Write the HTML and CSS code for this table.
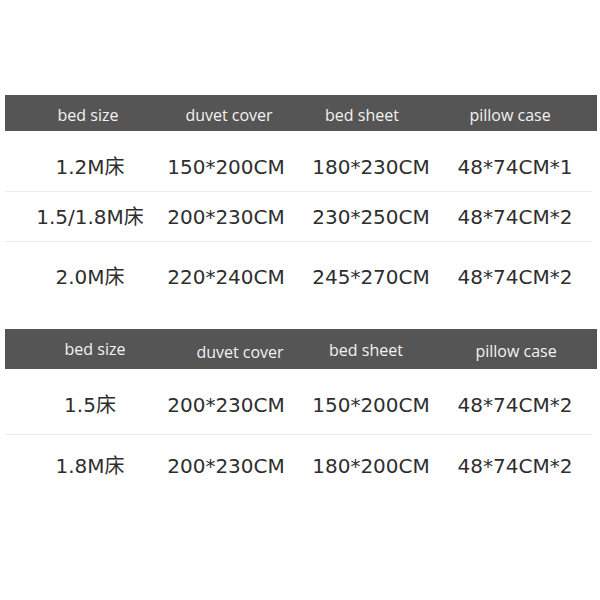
FILE: index.html
```html
<!DOCTYPE html>
<html>
<head>
<meta charset="utf-8">
<link rel="stylesheet" href="styles.css">
</head>
<body>
<div class="page">
  <section class="table t1">
    <div class="head h1">
      <span>bed size</span><span>duvet cover</span><span>bed sheet</span><span>pillow case</span>
    </div>
    <div class="row r11 line">
      <span>1.2M床</span><span>150*200CM</span><span>180*230CM</span><span>48*74CM*1</span>
    </div>
    <div class="row r12 line">
      <span>1.5/1.8M床</span><span>200*230CM</span><span>230*250CM</span><span>48*74CM*2</span>
    </div>
    <div class="row r13">
      <span>2.0M床</span><span>220*240CM</span><span>245*270CM</span><span>48*74CM*2</span>
    </div>
  </section>
  <section class="table t2">
    <div class="head h2">
      <span class="a">bed size</span><span class="b">duvet cover</span><span class="c">bed sheet</span><span class="d">pillow case</span>
    </div>
    <div class="row r21 line">
      <span>1.5床</span><span>200*230CM</span><span>150*200CM</span><span>48*74CM*2</span>
    </div>
    <div class="row r22">
      <span>1.8M床</span><span>200*230CM</span><span>180*200CM</span><span>48*74CM*2</span>
    </div>
  </section>
</div>
</body>
</html>
```
FILE: styles.css
```css
html, body {
  margin: 0;
  padding: 0;
  background: #ffffff;
}
.page {
  width: 600px;
  height: 600px;
  padding-top: 95px;
  box-sizing: border-box;
}
.table {
  margin-left: 5px;
  width: 592px;
}
.t2 {
  margin-top: 0;
}
.head {
  display: grid;
  background: #555555;
  color: #f2f2f2;
  font-family: "Open Sans", sans-serif;
  font-size: 16px;
  line-height: 20px;
  box-sizing: border-box;
}
.head span {
  display: flex;
  justify-content: center;
  white-space: nowrap;
}
.h1 {
  height: 36px;
  grid-template-columns: 166px 116px 150px 146px;
  padding-top: 10px;
}
.h2 {
  height: 40px;
  grid-template-columns: 180px 110px 142px 158px;
}
.h2 .a { padding-top: 10px; }
.h2 .b { padding-top: 13px; }
.h2 .c { padding-top: 11px; }
.h2 .d { padding-top: 12px; }
.row {
  display: grid;
  grid-template-columns: 136px 136px 154px 134px;
  padding-left: 17px;
  box-sizing: border-box;
  font-family: "DejaVu Sans", "Noto Sans CJK SC", sans-serif;
  font-size: 20px;
  line-height: 20px;
  color: #2e2e2e;
  align-items: start;
}
.row span {
  display: flex;
  justify-content: center;
  white-space: nowrap;
}
.line {
  border-bottom: 1px solid #ececec;
  width: 587px;
}
.r11 { height: 61px; padding-top: 26px; }
.r12 { height: 50px; padding-top: 15px; }
.r13 { height: 87px; padding-top: 25px; }
.r21 { height: 66px; padding-top: 26px; }
.r22 { height: 60px; padding-top: 21px; }
```
